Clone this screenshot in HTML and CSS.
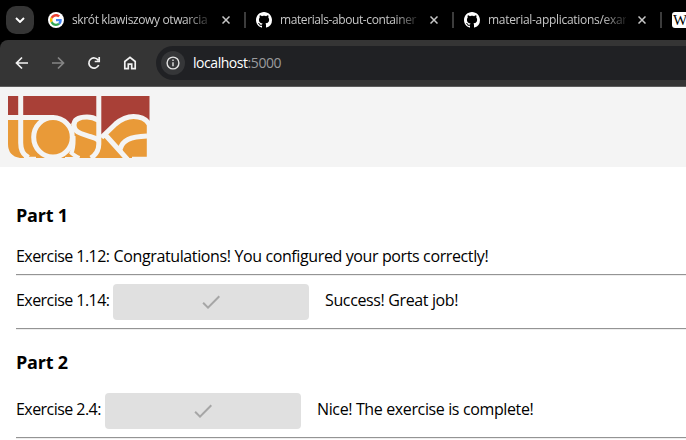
FILE: index.html
```
<!DOCTYPE html>
<html lang="en">
<head>
<meta charset="utf-8">
<title>Toska</title>
<link rel="stylesheet" href="styles.css">
</head>
<body>
<svg class="defs" width="0" height="0">
  <symbol id="close" viewBox="0 0 8 8"><path d="M.5.5l7 7M7.5.5l-7 7" fill="none" stroke="currentColor" stroke-width="1.5"/></symbol>
  <symbol id="github" viewBox="0 0 16 16"><path fill="currentColor" d="M8 0C3.58 0 0 3.58 0 8c0 3.54 2.29 6.53 5.47 7.59.4.07.55-.17.55-.38 0-.19-.01-.82-.01-1.49-2.01.37-2.53-.49-2.69-.94-.09-.23-.48-.94-.82-1.13-.28-.15-.68-.52-.01-.53.63-.01 1.08.58 1.23.82.72 1.21 1.87.87 2.33.66.07-.52.28-.87.51-1.07-1.78-.2-3.64-.89-3.64-3.95 0-.87.31-1.59.82-2.15-.08-.2-.36-1.02.08-2.12 0 0 .67-.21 2.2.82.64-.18 1.32-.27 2-.27s1.36.09 2 .27c1.53-1.04 2.2-.82 2.2-.82.44 1.1.16 1.92.08 2.12.51.56.82 1.27.82 2.15 0 3.07-1.87 3.75-3.65 3.95.29.25.54.73.54 1.48 0 1.07-.01 1.93-.01 2.2 0 .21.15.46.55.38A8 8 0 0 0 16 8c0-4.42-3.58-8-8-8z"/></symbol>
  <symbol id="check" viewBox="0 0 24 24"><path fill="currentColor" d="M9 16.17L4.83 12l-1.42 1.41L9 19 21 7l-1.41-1.41z"/></symbol>
</svg>
<div class="tabstrip">
  <div class="tabsearch"><svg width="10" height="6" viewBox="0 0 10 6"><path d="M1 1l4 4 4-4" fill="none" stroke="#fff" stroke-width="1.9"/></svg></div>
  <div class="tab first">
    <span class="google"><svg width="12" height="12" viewBox="0 0 48 48"><path fill="#EA4335" d="M24 9.5c3.5 0 6.700 1.200 9.200 3.600l6.900-6.900C35.900 2.400 30.500 0 24 0 14.600 0 6.500 5.400 2.600 13.200l8 6.200C12.400 13.700 17.700 9.500 24 9.500z"/><path fill="#4285F4" d="M47 24.600c0-1.600-.2-3.100-.4-4.600H24v9h12.900c-.6 3-2.300 5.500-4.800 7.200l7.700 6C44.400 38 47 31.800 47 24.600z"/><path fill="#FBBC05" d="M10.500 28.600a14 14 0 0 1 0-9.200l-8-6.200a24 24 0 0 0 0 21.600z"/><path fill="#34A853" d="M24 48c6.500 0 11.900-2.100 15.900-5.800l-7.700-6c-2.200 1.500-4.900 2.300-8.200 2.300-6.300 0-11.600-4.200-13.500-9.900l-8 6.200C6.500 42.600 14.600 48 24 48z"/></svg></span>
    <span class="title t1">skrót klawiszowy otwarcia</span>
    <svg class="close"><use href="#close"/></svg>
  </div>
  <div class="tab">
    <svg class="favicon"><use href="#github"/></svg>
    <span class="title t2">materials-about-container</span>
    <svg class="close"><use href="#close"/></svg>
  </div>
  <div class="tab">
    <svg class="favicon"><use href="#github"/></svg>
    <span class="title t3">material-applications/exar</span>
    <svg class="close"><use href="#close"/></svg>
  </div>
  <div class="tab last"><span class="wiki">W</span></div>
</div>
<div class="corner"><div class="toolbar">
  <svg class="nav" viewBox="0 0 16 16"><path d="M14 8H3M8 2.500L2.500 8 8 13.500"/></svg>
  <svg class="nav dim" viewBox="0 0 16 16"><path d="M2 8h11M8 2.500L13.500 8 8 13.500"/></svg>
  <svg class="nav" viewBox="0 0 16 16"><path d="M12.700 10A5.100 5.100 0 1 1 12.200 5.200M13.200 2v4.500H8.700"/></svg>
  <svg class="nav" viewBox="0 0 16 16"><path d="M2.800 6.500L8 2.300l5.200 4.200v7.200H9.700V9.200H6.300v4.500H2.800z"/></svg>
  <div class="address">
    <span class="info"><svg width="14" height="14" viewBox="0 0 14 14"><circle cx="7" cy="7" r="5.900" fill="none" stroke="#e3e3e3" stroke-width="1.400"/><path d="M7 6.200v4M7 3.600v1.500" stroke="#e3e3e3" stroke-width="1.400"/></svg></span>
    <span class="url">localhost<i>:5000</i></span>
  </div>
</div></div>
<header class="banner">
  <svg class="logo" viewBox="0 0 142 62" role="img" aria-label="toska">
    <path fill="#a94037" d="M0 0h141.500v26L126 21 94 42 90 23H72l-9.300 5L54 22H0z"/>
    <path fill="#e99a38" d="M0 22h54l8.700 7L72 22h18l3 20 15-15q8-6.500 18-6.500 9 0 13 7V62H12Q0 60 0 48z"/>
    <g fill="none" stroke="#f4f4f4" stroke-width="5">
      <path d="M0 21.400h46M12.700 0v47q0 11 8 14.500"/>
      <path stroke-width="1.500" d="M16 61.500h12M57 61.800h10"/>
      <ellipse cx="45" cy="41.200" rx="19.300" ry="19.800"/>
      <path d="M90 24q-5-3-11-3-13 0-13 8 0 6 7 8.500l9 3q6 1.500 9 4"/>
      <path stroke-width="4" d="M65.500 40q.5 11-2 17 5 4 8 5"/>
      <path d="M90.800 0v48q0 9-8 14"/>
      <path d="M93.500 41.500l14-13.500q9-7.500 18-7.500 11 0 15.500 7.500M97 38.500l22.500 25M139 40q-13 .5-19 3.500-6 3-7.500 9"/>
      <path stroke-width="2" d="M113.500 52q0 9 7 10.500M139.800 27v35M124 61.700h16"/>
    </g>
  </svg>
</header>
<main>
  <h3>Part 1</h3>
  <div class="line"><span class="s2">Exercise 1.12:</span> <span class="s1">Congratulations! You configured your ports correctly!</span></div>
  <hr>
  <div class="row"><span class="label s2">Exercise 1.14:</span><button disabled><svg><use href="#check"/></svg></button><span class="s3">Success! Great job!</span></div>
  <hr>
  <h3 class="second">Part 2</h3>
  <div class="row"><span class="label short s2">Exercise 2.4:</span><button disabled><svg><use href="#check"/></svg></button><span class="s3">Nice! The exercise is complete!</span></div>
  <hr>
</main>
</body>
</html>
```
FILE: styles.css
```
* { box-sizing: border-box; }
body { margin: 0; width: 686px; height: 440px; overflow: hidden; background: #fff; color: #000; font: 16px "Open Sans", "Noto Sans", sans-serif; white-space: nowrap; }
svg { display: block; flex: none; }
.defs { position: absolute; }
.tabstrip { display: flex; align-items: center; height: 40px; padding-left: 6px; background: #000; overflow: hidden; }
.tabsearch { flex: none; display: grid; place-items: center; width: 28px; height: 28px; border-radius: 10px; background: #353535; }
.tab { flex: none; display: flex; align-items: center; width: 208px; height: 16px; padding-left: 10px; border-left: 2px solid #3c3c3c; color: #c7c7c7; }
.tab.first { width: 210px; padding-left: 12px; border-color: transparent; }
.google { flex: none; display: grid; place-items: center; width: 16px; height: 16px; border-radius: 50%; background: #fff; }
.favicon { width: 16px; height: 16px; color: #fff; }
.title { flex: none; width: 138px; margin-left: 8px; overflow: hidden; font-size: 12px; line-height: 20px; -webkit-mask-image: linear-gradient(90deg, #000 114px, rgba(0, 0, 0, .15) 138px); mask-image: linear-gradient(90deg, #000 114px, rgba(0, 0, 0, .15) 138px); }
.t1 { letter-spacing: -.38px; }
.t2 { letter-spacing: -.4px; }
.t3 { letter-spacing: -.3px; }
.close { width: 8px; height: 8px; margin-left: 12px; }
.wiki { flex: none; width: 16px; height: 16px; border-radius: 3px; background: #fff; color: #000; font: 15px/16px "Liberation Serif", serif; text-align: center; }
.corner { background: #000; }
.toolbar { display: flex; align-items: center; gap: 20px; height: 47px; padding: 0 0 1px 14px; border-bottom: 1px solid #5c5c5c; border-radius: 8px 0 0; background: #353535; }
.nav { width: 16px; height: 16px; fill: none; stroke: #f2f2f2; stroke-width: 1.700; }
.dim { stroke: #858585; }
.address { flex: 1; display: flex; align-items: center; height: 34px; margin-left: -2px; padding-left: 5px; border-radius: 17px 0 0 17px; background: #202124; }
.info { display: grid; place-items: center; width: 24px; height: 24px; border-radius: 50%; background: #353638; }
.url { margin-left: 8px; color: #fff; font-size: 14px; letter-spacing: -.45px; }
.url i { font-style: normal; color: #9a9b9d; }
.banner { height: 80px; padding: 9px 8px; background: #f4f4f4; }
.logo { width: 142px; height: 62px; }
main { padding: 36px 0 0 16px; }
h3 { margin: 0; font-size: 18px; line-height: 24px; letter-spacing: -.2px; }
.line { height: 30px; margin-top: 17px; line-height: 24px; }
hr { height: 2px; margin: 0; border: 0; border-top: 1px solid #949494; background: #eee; }
.row { display: flex; height: 52px; padding-top: 8px; line-height: 32px; }
.second { margin-top: 20px; }
.second + .row { margin-top: 11px; }
button { display: grid; place-items: center; width: 196px; height: 36px; margin: 0 16px 0 4px; padding: 0; border: 0; border-radius: 4px; background: #e0e0e0; color: #a6a6a6; }
button svg { width: 24px; height: 24px; }
.s1 { letter-spacing: -.38px; }
.s2 { letter-spacing: -.55px; }
.s3 { letter-spacing: -.37px; }
.label { width: 93px; }
.label.short { width: 85px; }
```
